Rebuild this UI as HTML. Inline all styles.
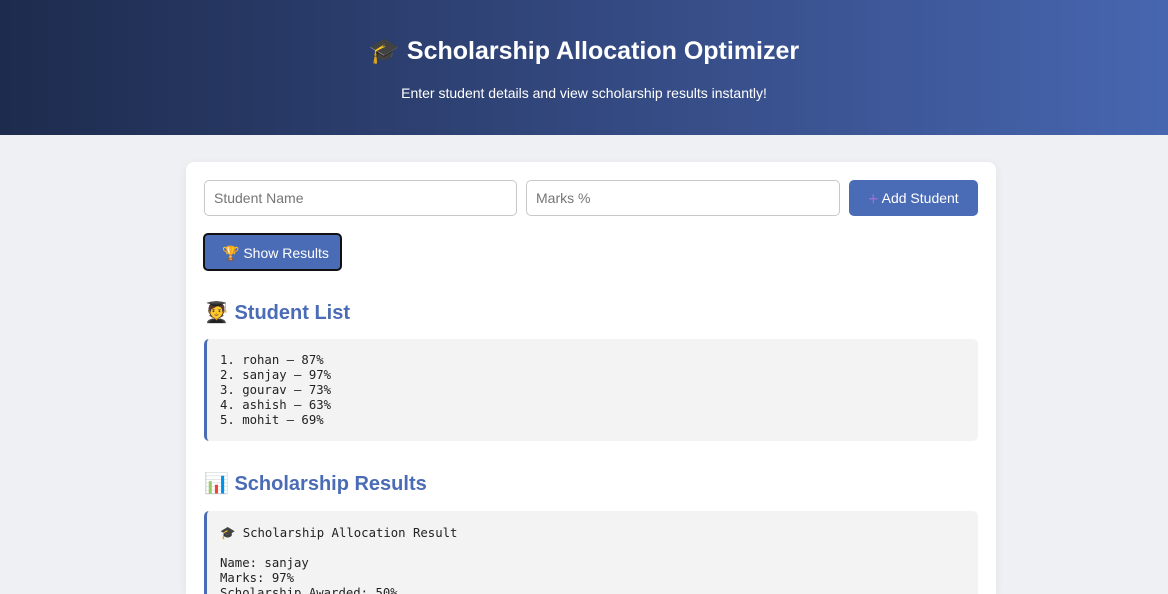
<!DOCTYPE html>
<html><head><meta charset="utf-8"><style>
*{box-sizing:border-box;margin:0;padding:0}
html,body{width:1168px;height:594px;overflow:hidden}
body{background:#eef0f3;font-family:"Liberation Sans","DejaVu Sans",sans-serif;position:relative}
.hdr{height:135px;background:linear-gradient(90deg,#1d2b4d 0%,#33487f 50%,#4766b0 100%);color:#fff;text-align:center}
.hdr h1{position:absolute;top:37px;left:0;width:1168px;font-size:25px;font-weight:bold}
.hdr p{position:absolute;top:85px;left:0;width:1168px;font-size:14px}
.card{position:absolute;left:186px;top:162px;width:810px;height:432px;overflow:hidden;background:#fff;border-radius:8px 8px 0 0;box-shadow:0 2px 10px rgba(0,0,0,.06)}
.in{position:absolute;top:18px;height:36px;border:1px solid #c8c8c8;border-radius:5px;font-size:14px;color:#757575;padding:9px 9px}
.btn{position:absolute;background:#4a6bb5;color:#fff;font-size:14px;border-radius:5px}
h2{position:absolute;left:18px;font-size:20px;font-weight:bold;color:#4a6bb5}
.box{position:absolute;left:18px;width:774px;background:#f3f3f3;border-left:3px solid #4a6bb5;border-radius:5px;font-family:"DejaVu Sans Mono","Liberation Mono",monospace;font-size:12.3px;line-height:15px;color:#222;padding:14px 13px;white-space:pre}
</style></head><body>
<div class="hdr"><h1>🎓 Scholarship Allocation Optimizer</h1><p>Enter student details and view scholarship results instantly!</p></div>
<div class="card">
<div class="in" style="left:18px;width:313px">Student Name</div>
<div class="in" style="left:340px;width:314px">Marks %</div>
<div class="btn" style="left:663px;top:18px;width:129px;height:36px;padding-top:10px;padding-left:19px"><span style="color:#9b6fd0;font-size:18px;line-height:14px;vertical-align:-2px">+</span> Add Student</div>
<div class="btn" style="left:17px;top:71px;width:139px;height:38px;border:2px solid #111;padding-top:10px;padding-left:17px">🏆 Show Results</div>
<h2 style="top:138px">🧑‍🎓 Student List</h2>
<div class="box" style="top:177px;height:102px">1. rohan — 87%
2. sanjay — 97%
3. gourav — 73%
4. ashish — 63%
5. mohit — 69%</div>
<h2 style="top:309px">📊 Scholarship Results</h2>
<div class="box" style="top:349px;height:100px;padding-top:15px">🎓 Scholarship Allocation Result

Name: sanjay
Marks: 97%
Scholarship Awarded: 50%</div>
</div>
</body></html>
